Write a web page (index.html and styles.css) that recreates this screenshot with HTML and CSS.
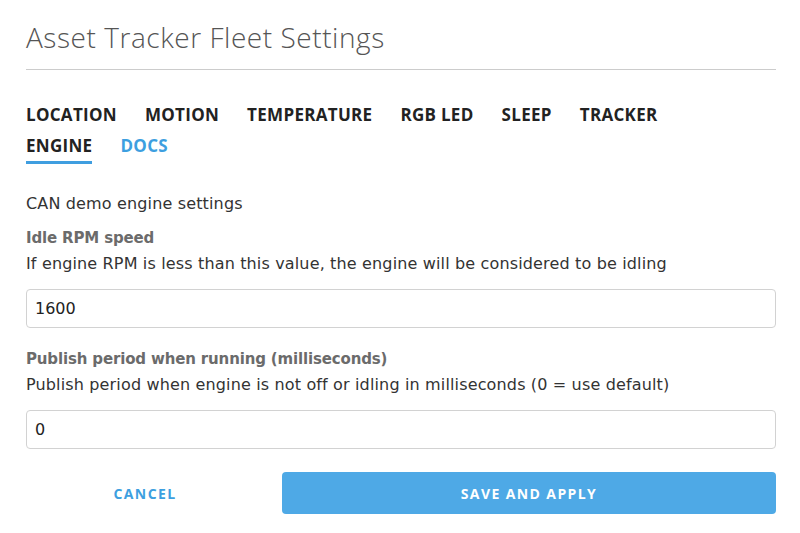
FILE: index.html
```html
<!DOCTYPE html>
<html>
<head>
<meta charset="utf-8">
<link rel="stylesheet" href="styles.css">
</head>
<body>
<div class="dialog">
  <h1 class="title">Asset Tracker Fleet Settings</h1>
  <nav class="tabs">
    <span class="tab">LOCATION</span>
    <span class="tab">MOTION</span>
    <span class="tab">TEMPERATURE</span>
    <span class="tab">RGB LED</span>
    <span class="tab">SLEEP</span>
    <span class="tab">TRACKER</span>
    <span class="tab active">ENGINE</span>
    <span class="tab link">DOCS</span>
  </nav>
  <p class="intro">CAN demo engine settings</p>
  <div class="field">
    <div class="label">Idle RPM speed</div>
    <div class="desc">If engine RPM is less than this value, the engine will be considered to be idling</div>
    <input class="input" type="text" value="1600">
  </div>
  <div class="field">
    <div class="label">Publish period when running (milliseconds)</div>
    <div class="desc">Publish period when engine is not off or idling in milliseconds (0 = use default)</div>
    <input class="input" type="text" value="0">
  </div>
  <div class="actions">
    <button class="btn cancel">CANCEL</button>
    <button class="btn save">SAVE AND APPLY</button>
  </div>
</div>
</body>
</html>
```

FILE: styles.css
```css
* { box-sizing: border-box; }
html, body { margin: 0; padding: 0; background: #fff; }
body { font-family: "DejaVu Sans", "Open Sans", sans-serif; color: #333; }
.dialog { padding: 0 24px 0 26px; }
.title {
  margin: 0;
  padding-top: 20px;
  height: 70px;
  font-family: "Open Sans", sans-serif;
  font-size: 28px;
  font-weight: 300;
  letter-spacing: 0.55px;
  color: #555;
  line-height: 34px;
  border-bottom: 1px solid #ccc;
}
.tabs {
  display: flex;
  flex-wrap: wrap;
  column-gap: 28px;
  row-gap: 0;
  margin-top: 29px;
  width: 680px;
}
.tab {
  font-family: "Open Sans", sans-serif;
  font-size: 17px;
  font-weight: 700;
  color: #222;
  line-height: 31px;
  letter-spacing: 0.3px;
}
.tab.active { border-bottom: 3px solid #3f9ee0; }
.tab.link { color: #3d9fe0; }
.intro { margin: 30px 0 0; font-size: 16px; line-height: 20px; letter-spacing: 0.15px; }
.field { margin-top: 14px; }
.field + .field { margin-top: 21px; }
.label { font-size: 15px; font-weight: 700; color: #6b6b6b; line-height: 20px; letter-spacing: -0.15px; }
.desc { font-size: 16px; line-height: 20px; margin-top: 6px; color: #333; letter-spacing: 0.15px; }
.input {
  display: block;
  width: 100%;
  height: 39px;
  margin-top: 15px;
  border: 1px solid #d2d2d2;
  border-radius: 4px;
  padding: 0 8px;
  font-family: inherit;
  font-size: 16px;
  color: #222;
}
.actions { display: flex; gap: 18px; margin-top: 23px; }
.btn {
  height: 42px;
  border: 0;
  border-radius: 4px;
  font-family: "Open Sans", sans-serif;
  font-size: 14px;
  font-weight: 700;
  letter-spacing: 1.4px;
}
.cancel { flex: 0 0 238px; background: transparent; color: #3d9fe0; }
.save { flex: 1; background: #4ea9e6; color: #fff; }
```
